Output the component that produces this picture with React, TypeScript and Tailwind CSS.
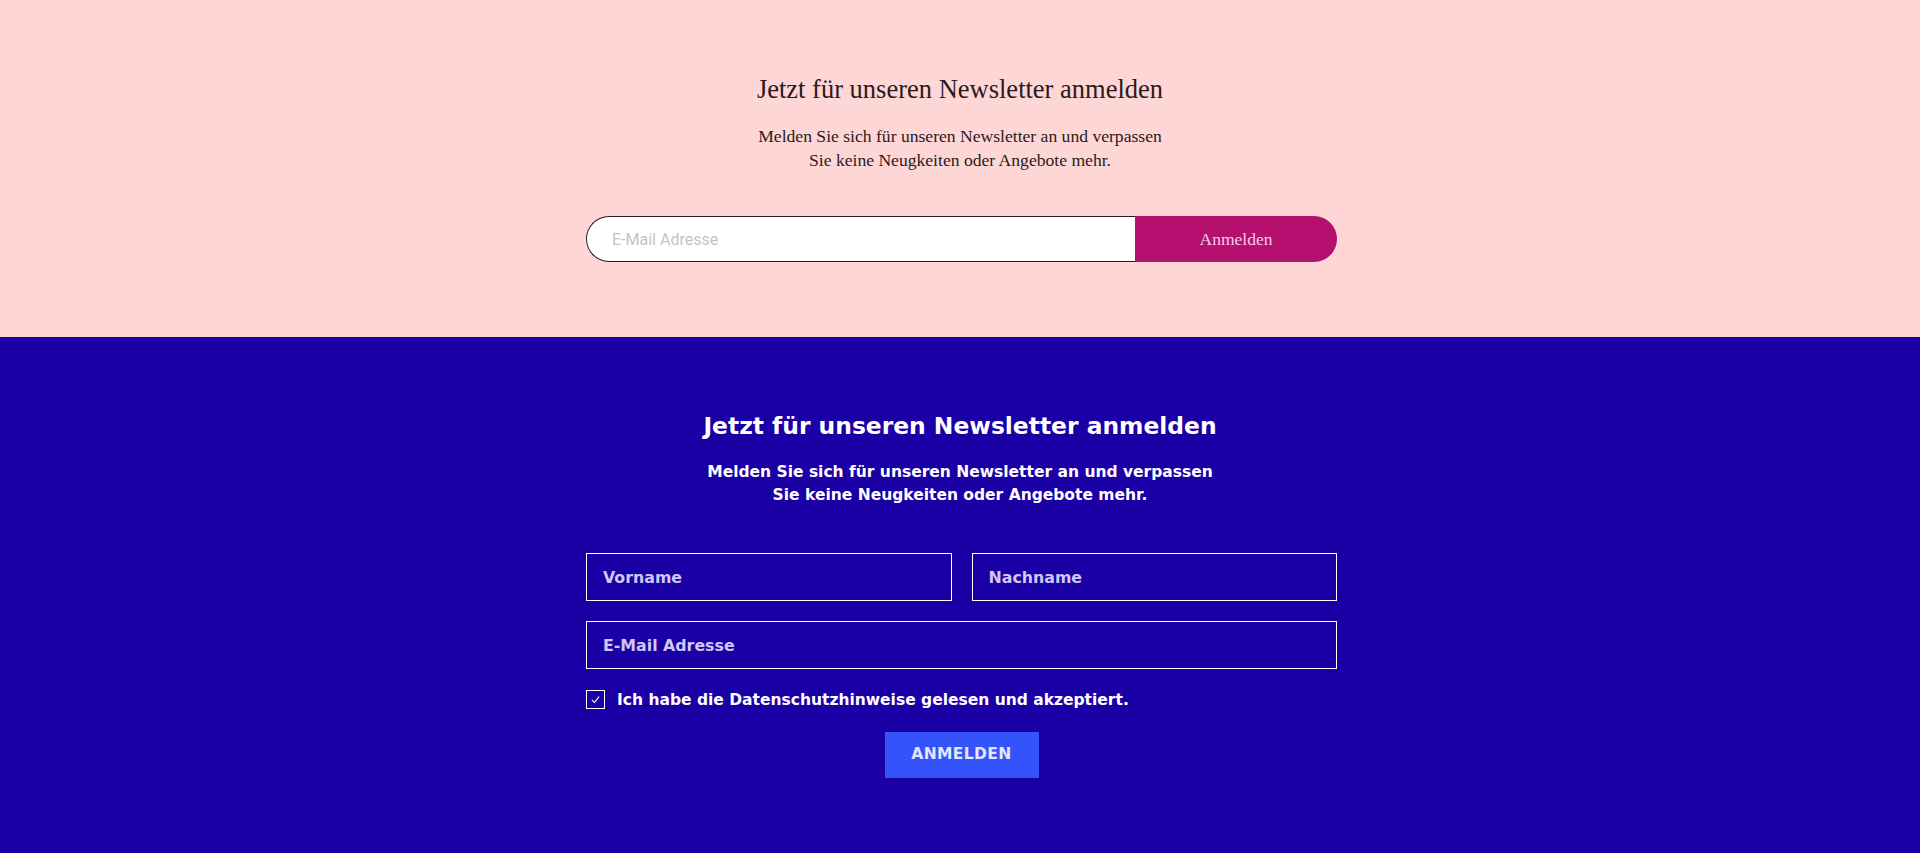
import { useState } from "react";

export default function App() {
  const [accepted, setAccepted] = useState(true);

  return (
    <div className="min-h-screen w-full">
      {/* Newsletter – serif variant */}
      <section className="flex h-[337px] flex-col items-center bg-[#fed6d6] pt-[73px] font-['Liberation_Serif',serif] text-[#2b1a1c]">
        <h2 className="text-[26.5px] leading-8">Jetzt für unseren Newsletter anmelden</h2>
        <p className="mt-[19px] text-center text-[17.6px] leading-6">
          Melden Sie sich für unseren Newsletter an und verpassen
          <br />
          Sie keine Neugkeiten oder Angebote mehr.
        </p>
        <form className="ml-[3px] mt-[44px] flex h-[46px] w-[751px]" onSubmit={(e) => e.preventDefault()}>
          <input
            type="email"
            placeholder="E-Mail Adresse"
            className="h-full flex-1 rounded-l-full border border-r-0 border-[#2b1a1c] bg-white pl-[25px] font-['Roboto',sans-serif] text-base text-gray-800 outline-none placeholder:text-[#c4c4c4]"
          />
          <button
            type="submit"
            className="h-full w-[202px] rounded-r-full bg-[#b50f6f] text-[17.5px] text-[#f6cde4]"
          >
            Anmelden
          </button>
        </form>
      </section>

      {/* Newsletter – bold variant */}
      <section className="flex h-[516px] flex-col items-center bg-[#1b00a6] pt-[74px] font-['DejaVu_Sans',sans-serif] font-bold text-white">
        <h2 className="text-[23.4px] leading-[30px]">Jetzt für unseren Newsletter anmelden</h2>
        <p className="mt-[20px] text-center text-[15.5px] leading-[23px]">
          Melden Sie sich für unseren Newsletter an und verpassen
          <br />
          Sie keine Neugkeiten oder Angebote mehr.
        </p>
        <form className="ml-[3px] mt-[46px] flex w-[751px] flex-col" onSubmit={(e) => e.preventDefault()}>
          <div className="grid grid-cols-2 gap-5">
            <input
              placeholder="Vorname"
              className="h-12 border border-white bg-transparent px-4 text-[15.8px] text-white outline-none placeholder:text-[#cfc7f5]"
            />
            <input
              placeholder="Nachname"
              className="h-12 border border-white bg-transparent px-4 text-[15.8px] text-white outline-none placeholder:text-[#cfc7f5]"
            />
          </div>
          <input
            type="email"
            placeholder="E-Mail Adresse"
            className="mt-5 h-12 border border-white bg-transparent px-4 text-[15.8px] text-white outline-none placeholder:text-[#cfc7f5]"
          />
          <label className="mt-[21px] flex cursor-pointer items-center gap-[12px] text-[15.5px] leading-[18px]">
            <span
              onClick={() => setAccepted(!accepted)}
              className="flex h-[19px] w-[19px] items-center justify-center border border-white"
            >
              {accepted && (
                <svg viewBox="0 0 12 12" className="h-[11px] w-[11px]" fill="none" stroke="white" strokeWidth="1.1">
                  <path d="M2 6.5 L4.8 9.2 L10 2.8" />
                </svg>
              )}
            </span>
            Ich habe die Datenschutzhinweise gelesen und akzeptiert.
          </label>
          <button
            type="submit"
            className="mt-[23px] h-[46px] w-[154px] self-center bg-[#3553fb] text-[15.5px] tracking-wide text-[#e3e6ff]"
          >
            ANMELDEN
          </button>
        </form>
      </section>
    </div>
  );
}
